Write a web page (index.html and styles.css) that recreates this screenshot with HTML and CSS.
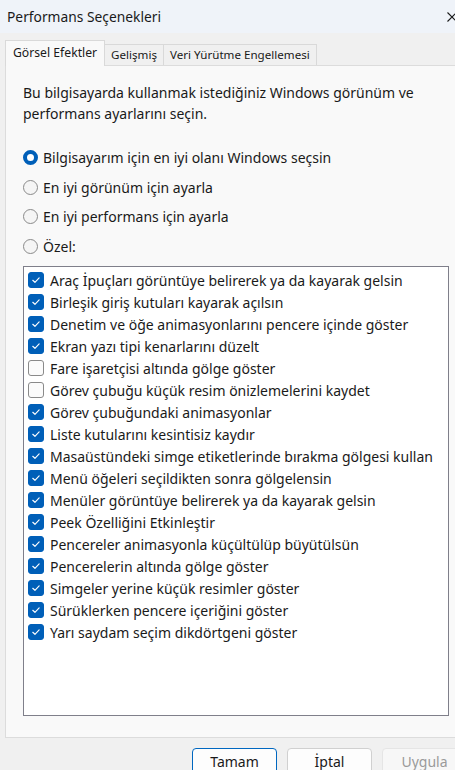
FILE: index.html
```html
<!DOCTYPE html>
<html lang="tr">
<head>
<meta charset="utf-8">
<title>Performans Seçenekleri</title>
<link rel="stylesheet" href="styles.css">
</head>
<body>
<div class="dialog">
  <div class="titlebar">
    <span class="title">Performans Seçenekleri</span>
    <svg class="close" width="10" height="10" viewBox="0 0 10 10"><path d="M0.5 0.5 L9.5 9.5 M9.5 0.5 L0.5 9.5" stroke="#1a1a1a" stroke-width="1.1" fill="none"/></svg>
  </div>
  <div class="tabs">
    <div class="tab active">Görsel Efektler</div>
    <div class="tab">Gelişmiş</div>
    <div class="tab">Veri Yürütme Engellemesi</div>
  </div>
  <div class="panel">
    <p class="desc">Bu bilgisayarda kullanmak istediğiniz Windows görünüm ve performans ayarlarını seçin.</p>
    <div class="radios">
      <div class="radio-row"><span class="radio on"></span>Bilgisayarım için en iyi olanı Windows seçsin</div>
      <div class="radio-row"><span class="radio"></span>En iyi görünüm için ayarla</div>
      <div class="radio-row"><span class="radio"></span>En iyi performans için ayarla</div>
      <div class="radio-row"><span class="radio"></span>Özel:</div>
    </div>
    <div class="list">
      <div class="item"><span class="cb on"><svg viewBox="0 0 16 16"><path d="M4.3 8.3 L6.8 10.6 L11.6 5.6"/></svg></span>Araç İpuçları görüntüye belirerek ya da kayarak gelsin</div>
      <div class="item"><span class="cb on"><svg viewBox="0 0 16 16"><path d="M4.3 8.3 L6.8 10.6 L11.6 5.6"/></svg></span>Birleşik giriş kutuları kayarak açılsın</div>
      <div class="item"><span class="cb on"><svg viewBox="0 0 16 16"><path d="M4.3 8.3 L6.8 10.6 L11.6 5.6"/></svg></span>Denetim ve öğe animasyonlarını pencere içinde göster</div>
      <div class="item"><span class="cb on"><svg viewBox="0 0 16 16"><path d="M4.3 8.3 L6.8 10.6 L11.6 5.6"/></svg></span>Ekran yazı tipi kenarlarını düzelt</div>
      <div class="item"><span class="cb"></span>Fare işaretçisi altında gölge göster</div>
      <div class="item"><span class="cb"></span>Görev çubuğu küçük resim önizlemelerini kaydet</div>
      <div class="item"><span class="cb on"><svg viewBox="0 0 16 16"><path d="M4.3 8.3 L6.8 10.6 L11.6 5.6"/></svg></span>Görev çubuğundaki animasyonlar</div>
      <div class="item"><span class="cb on"><svg viewBox="0 0 16 16"><path d="M4.3 8.3 L6.8 10.6 L11.6 5.6"/></svg></span>Liste kutularını kesintisiz kaydır</div>
      <div class="item"><span class="cb on"><svg viewBox="0 0 16 16"><path d="M4.3 8.3 L6.8 10.6 L11.6 5.6"/></svg></span>Masaüstündeki simge etiketlerinde bırakma gölgesi kullan</div>
      <div class="item"><span class="cb on"><svg viewBox="0 0 16 16"><path d="M4.3 8.3 L6.8 10.6 L11.6 5.6"/></svg></span>Menü öğeleri seçildikten sonra gölgelensin</div>
      <div class="item"><span class="cb on"><svg viewBox="0 0 16 16"><path d="M4.3 8.3 L6.8 10.6 L11.6 5.6"/></svg></span>Menüler görüntüye belirerek ya da kayarak gelsin</div>
      <div class="item"><span class="cb on"><svg viewBox="0 0 16 16"><path d="M4.3 8.3 L6.8 10.6 L11.6 5.6"/></svg></span>Peek Özelliğini Etkinleştir</div>
      <div class="item"><span class="cb on"><svg viewBox="0 0 16 16"><path d="M4.3 8.3 L6.8 10.6 L11.6 5.6"/></svg></span>Pencereler animasyonla küçültülüp büyütülsün</div>
      <div class="item"><span class="cb on"><svg viewBox="0 0 16 16"><path d="M4.3 8.3 L6.8 10.6 L11.6 5.6"/></svg></span>Pencerelerin altında gölge göster</div>
      <div class="item"><span class="cb on"><svg viewBox="0 0 16 16"><path d="M4.3 8.3 L6.8 10.6 L11.6 5.6"/></svg></span>Simgeler yerine küçük resimler göster</div>
      <div class="item"><span class="cb on"><svg viewBox="0 0 16 16"><path d="M4.3 8.3 L6.8 10.6 L11.6 5.6"/></svg></span>Sürüklerken pencere içeriğini göster</div>
      <div class="item"><span class="cb on"><svg viewBox="0 0 16 16"><path d="M4.3 8.3 L6.8 10.6 L11.6 5.6"/></svg></span>Yarı saydam seçim dikdörtgeni göster</div>
    </div>
  </div>
  <div class="buttons">
    <div class="btn default">Tamam</div>
    <div class="btn">İptal</div>
    <div class="btn disabled">Uygula</div>
  </div>
</div>
</body>
</html>
```

FILE: styles.css
```css
html, body {
  margin: 0;
  padding: 0;
  background: #f0f0f0;
  overflow: hidden;
  width: 455px;
  height: 770px;
}
.dialog {
  width: 472px;
  height: 800px;
  font-family: "Noto Sans", "Open Sans", sans-serif;
  font-size: 14px;
  color: #1a1a1a;
  background: #f0f0f0;
}
.titlebar {
  height: 33px;
  background: #eff3f9;
  display: flex;
  align-items: center;
  justify-content: space-between;
  padding-left: 7px;
  padding-right: 15px;
  box-sizing: border-box;
}
.title {
  font-size: 13.8px;
  color: #1a1a1a;
}
.close {
  display: block;
}
.tabs {
  display: flex;
  align-items: flex-end;
  padding-left: 5px;
  margin-top: 7px;
  height: 25px;
  position: relative;
  z-index: 1;
}
.tab {
  height: 21px;
  line-height: 20px;
  padding: 0 6px;
  border: 1px solid #d9d9d9;
  border-bottom: none;
  border-left: none;
  background: #f0f0f0;
  box-sizing: border-box;
  font-size: 11.6px;
}
.tab.active {
  line-height: 24px;
  padding: 0 7px;
  border-left: 1px solid #d9d9d9;
  background: #f9f9f9;
  margin-bottom: -1px;
  height: 26px;
  font-size: 12.2px;
}
.panel {
  margin: 0 5px;
  height: 673px;
  box-sizing: border-box;
  background: #f9f9f9;
  border: 1px solid #dcdcdc;
  padding: 16px 17px 0 17px;
}
.desc {
  margin: 0;
  line-height: 21px;
  width: 420px;
}
.radios {
  margin-top: 19px;
  display: flex;
  flex-direction: column;
}
.radio-row {
  height: 29.6px;
  display: flex;
  align-items: center;
}
.radio {
  width: 15px;
  height: 15px;
  box-sizing: border-box;
  border-radius: 50%;
  border: 1px solid #8a8a8a;
  background: #f5f5f5;
  margin-right: 5px;
  flex: none;
}
.radio.on {
  border: 4.5px solid #005fb8;
  background: #ffffff;
}
.list {
  margin-top: 5px;
  height: 450px;
  box-sizing: border-box;
  background: #ffffff;
  border: 1px solid #7f7f8a;
  padding: 2px 0 0 4px;
  width: 426px;
}
.item {
  height: 22px;
  display: flex;
  align-items: center;
  white-space: nowrap;
}
.cb {
  width: 16px;
  height: 16px;
  box-sizing: border-box;
  border-radius: 3px;
  border: 1px solid #8a8a8a;
  background: #fbfbfb;
  margin-right: 6px;
  flex: none;
  display: block;
}
.cb.on {
  background: #005fb8;
  border-color: #005fb8;
}
.cb svg {
  display: block;
  width: 14px;
  height: 14px;
}
.cb svg path {
  fill: none;
  stroke: #ffffff;
  stroke-width: 1.3;
  stroke-linecap: round;
  stroke-linejoin: round;
}
.buttons {
  display: flex;
  gap: 10px;
  padding-left: 192px;
  margin-top: 10px;
}
.btn {
  width: 85px;
  height: 30px;
  box-sizing: border-box;
  border: 1px solid #d0d0d0;
  border-radius: 4px;
  background: #fdfdfd;
  text-align: center;
  line-height: 26px;
  font-size: 14px;
  color: #1a1a1a;
}
.btn.default {
  border-color: #0067c0;
}
.btn.disabled {
  color: #9a9a9a;
  background: #f7f7f7;
  border-color: #e5e5e5;
}
```
